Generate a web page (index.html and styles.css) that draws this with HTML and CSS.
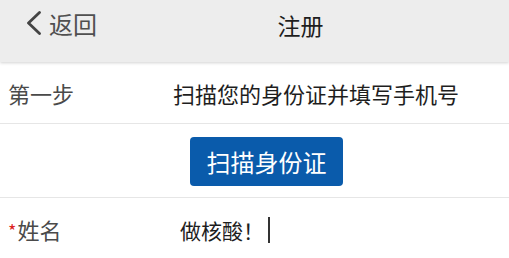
FILE: index.html
```html
<!DOCTYPE html>
<html>

<head>
  <title>注册</title>
  <meta charset="utf-8">
  <link rel="stylesheet" href="styles.css">
</head>

<body>
  <div class="header">
    <div class="back">
      <svg class="chevron" width="16" height="24" viewBox="0 0 16 24">
        <path d="M13.5 1.5 L2.5 12 L13.5 22.5" fill="none" stroke="#444" stroke-width="2.8" stroke-linecap="round" stroke-linejoin="round" />
      </svg>
      <span>返回</span>
    </div>
    <div class="title">注册</div>
  </div>
  <div class="row">
    <span class="label">第一步</span>
    <span class="value">扫描您的身份证并填写手机号</span>
  </div>
  <div class="row row-btn">
    <button class="scan">扫描身份证</button>
  </div>
  <div class="row">
    <span class="label"><i class="star">*</i>姓名</span>
    <span class="value field">做核酸！<b class="cursor"></b></span>
  </div>
</body>

</html>
```

FILE: styles.css
```css
* {
  padding: 0;
  margin: 0;
}

body {
  width: 509px;
  height: 258px;
  overflow: hidden;
  background: #fff;
  font-family: "Noto Sans CJK SC", "Noto Sans", sans-serif;
}

.header {
  height: 62px;
  background: #ededed;
  display: flex;
  align-items: center;
  box-shadow: 0 1px 3px rgba(0, 0, 0, 0.18);
  position: relative;
}

.back {
  width: 92px;
  flex-shrink: 0;
  padding-left: 26px;
  box-sizing: border-box;
  display: flex;
  align-items: center;
  gap: 7px;
  white-space: nowrap;
  font-size: 24px;
  color: #505050;
  margin-top: -16px;
}

.chevron {
  display: block;
  flex-shrink: 0;
}

.title {
  flex: 1;
  text-align: center;
  font-size: 23px;
  color: #1e1e1e;
  margin-top: -12px;
}

.row {
  display: flex;
  align-items: center;
  height: 61px;
  padding-left: 8px;
  border-bottom: 1px solid #e6e6e6;
}

.label {
  width: 165px;
  flex-shrink: 0;
  font-size: 22px;
  color: #4a4a4a;
}

.value {
  font-size: 22px;
  color: #1e1e1e;
}

.row-btn {
  height: 73px;
  padding-left: 190px;
}

.scan {
  width: 153px;
  height: 49px;
  margin-top: 2px;
  border: none;
  border-radius: 4px;
  background: #0a5bab;
  color: #fff;
  font-family: inherit;
  font-size: 24px;
}

.star {
  font-style: normal;
  color: #d22;
  font-size: 18px;
  margin-right: 1px;
  vertical-align: 1px;
}

.field {
  padding-left: 7px;
  font-size: 21px;
  display: flex;
  align-items: center;
  margin-top: 2px;
}

.cursor {
  display: inline-block;
  width: 1.5px;
  height: 26px;
  background: #333;
  margin-left: 4px;
}
```
